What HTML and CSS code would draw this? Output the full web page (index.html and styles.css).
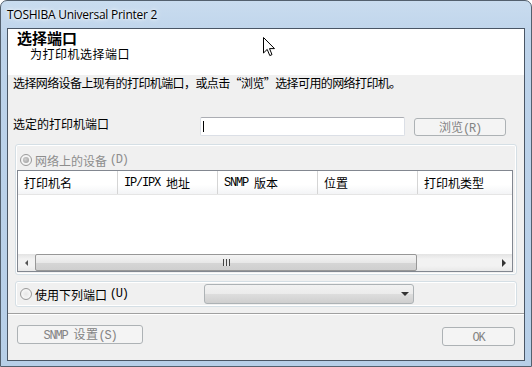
FILE: index.html
```html
<!DOCTYPE html>
<html lang="zh-CN">
<head>
  <meta charset="UTF-8">
  <title>TOSHIBA Universal Printer 2</title>
  <link rel="stylesheet" href="styles.css">
</head>
<body>

<div class="window">
  <div class="titlebar">TOSHIBA Universal Printer 2</div>

  <div class="client">
    <div class="header">
      <div class="head-title">选择端口</div>
      <div class="head-sub">为打印机选择端口</div>
    </div>

    <p class="desc">选择网络设备上现有的打印机端口，或点击“浏览”选择可用的网络打印机。</p>

    <div class="port-row">
      <span class="port-label">选定的打印机端口</span>
      <div class="textbox"><span class="caret"></span></div>
      <button class="btn btn-browse" disabled>浏览<span class="mono">(R)</span></button>
    </div>

    <div class="group group-net">
      <label class="radio-row disabled">
        <span class="radio checked"></span>网络上的设备 <span class="mono">(D)</span>
      </label>
      <div class="listview">
        <div class="lv-head">
          <div class="lv-col"><span>打印机名</span></div>
          <div class="lv-col"><span class="mono">IP/IPX </span><span>地址</span></div>
          <div class="lv-col"><span class="mono">SNMP </span><span>版本</span></div>
          <div class="lv-col"><span>位置</span></div>
          <div class="lv-col"><span>打印机类型</span></div>
        </div>
        <div class="lv-body"></div>
        <div class="hscroll">
          <div class="sb-arrow"><span class="tri-left"></span></div>
          <div class="sb-thumb"><span class="grip"></span></div>
          <div class="sb-track"></div>
          <div class="sb-arrow"><span class="tri-right"></span></div>
        </div>
      </div>
    </div>

    <div class="group group-port">
      <label class="radio-row">
        <span class="radio"></span>使用下列端口 <span class="mono">(U)</span>
      </label>
      <div class="combo"><span class="tri-down"></span></div>
    </div>

    <div class="separator"></div>

    <div class="buttons">
      <button class="btn btn-snmp" disabled><span class="mono">SNMP </span>设置<span class="mono">(S)</span></button>
      <button class="btn btn-ok" disabled><span class="mono">OK</span></button>
    </div>
  </div>

  <!-- mouse pointer caught in the screenshot -->
  <svg class="cursor" width="13" height="20" viewBox="0 0 13 20">
    <path d="M0.5 0.5 L0.5 16 L4.2 12.4 L6.8 18.6 L9 17.6 L6.5 11.6 L11.5 11.6 Z" fill="#fff" stroke="#000" stroke-width="1"/>
  </svg>
</div>

</body>
</html>
```

FILE: styles.css
```css
body {
  margin: 0;
  padding: 0;
  background: #fff;
  font-family: "Noto Sans CJK SC", "Noto Sans", sans-serif;
  font-size: 12px;
  color: #000;
}
.window {
  position: relative;
  width: 532px;
  height: 367px;
  box-sizing: border-box;
  border: 1px solid #53606e;
  border-radius: 7px 7px 0 0;
  background: linear-gradient(to bottom, #c9dcef 0, #bdd3ea 40px, #b7cfe8 100%);
  display: flex;
  flex-direction: column;
  overflow: hidden;
}
.titlebar {
  height: 27px;
  padding-left: 6px;
  line-height: 27px;
  font-family: "Open Sans", "Noto Sans", sans-serif;
  font-size: 12px;
  letter-spacing: -0.25px;
  color: #000;
  text-shadow: 0 0 6px #fff, 0 0 3px #fff;
}
.client {
  margin: 0 6px;
  height: 331px;
  border: 1px solid #4a5665;
  background: #f0f0f0;
  display: flex;
  flex-direction: column;
}
.mono {
  font-family: "Liberation Mono", monospace;
  font-size: 12px;
  letter-spacing: -1.2px;
}

/* header */
.header {
  height: 46px;
  background: #fff;
  padding: 1px 0 0 9px;
  box-sizing: border-box;
}
.head-title {
  font-size: 15px;
  font-weight: bold;
  line-height: 15px;
}
.head-sub {
  margin: 2px 0 0 13px;
  font-size: 12px;
  line-height: 13px;
  letter-spacing: 0.5px;
}
.desc {
  margin: 1px 0 0 5px;
  line-height: 14px;
  white-space: nowrap;
  letter-spacing: -0.6px;
}

/* port row */
.port-row {
  margin-top: 27px;
  height: 19px;
  display: flex;
  align-items: center;
}
.port-label {
  width: 187px;
  padding-left: 5px;
  line-height: 14px;
  margin-top: -5px;
}
.textbox {
  width: 205px;
  height: 19px;
  box-sizing: border-box;
  border: 1px solid #dbdfe6;
  border-top-color: #abadb3;
  background: #fff;
  border-radius: 2px;
  padding: 3px 0 0 2px;
}
.caret {
  display: block;
  width: 1px;
  height: 11px;
  background: #000;
}
.btn {
  font-family: "Noto Sans CJK SC", sans-serif;
  font-size: 12px;
  color: #838383;
  background: #f4f4f4;
  border: 1px solid #adb2b5;
  border-radius: 3px;
  padding: 0;
  line-height: 16px;
}
.btn-browse {
  margin-left: 9px;
  width: 92px;
  height: 18px;
}

/* group boxes */
.group {
  margin-left: 7px;
  width: 502px;
  box-sizing: border-box;
  border: 1px solid #d5dfe5;
  border-radius: 3px;
  box-shadow: inset 0 0 0 1px #fff;
}
.group-net {
  margin-top: 8px;
  height: 131px;
  padding: 7px 3px 2px 1px;
}
.radio-row {
  display: flex;
  align-items: center;
  height: 16px;
  padding-left: 3px;
  white-space: pre;
}
.radio-row.disabled {
  color: #8d8d8d;
}
.radio {
  width: 12px;
  height: 12px;
  box-sizing: border-box;
  border-radius: 50%;
  border: 1px solid #9a9a9a;
  background: radial-gradient(circle at 50% 50%, #e6e6e6 0, #f6f6f6 60%, #e0e0e0 100%);
  margin-right: 3px;
  position: relative;
}
.radio.checked::after {
  content: "";
  position: absolute;
  left: 2px;
  top: 2px;
  width: 6px;
  height: 6px;
  border-radius: 50%;
  background: radial-gradient(circle at 40% 40%, #d0d0d0, #9a9a9a);
}
.listview {
  margin-top: 2px;
  height: 102px;
  box-sizing: border-box;
  border: 1px solid #828790;
  background: #fff;
  display: flex;
  flex-direction: column;
}
.lv-head {
  display: flex;
  height: 24px;
  background: linear-gradient(to bottom, #fff 0, #fff 60%, #f3f4f6 100%);
  border-bottom: 1px solid #e5e5e5;
  box-sizing: border-box;
}
.lv-col {
  width: 100px;
  flex: none;
  box-sizing: border-box;
  border-right: 1px solid #d5d5d5;
  padding: 0 0 0 6px;
  display: flex;
  align-items: center;
  white-space: pre;
}
.lv-col:last-child {
  border-right: none;
  flex: 1;
}
.lv-body {
  flex: 1;
}
.hscroll {
  height: 17px;
  display: flex;
  background: linear-gradient(to bottom, #e3e3e3, #f2f2f2 30%, #f2f2f2 70%, #e8e8e8);
}
.sb-arrow {
  width: 17px;
  display: flex;
  align-items: center;
  justify-content: center;
}
.tri-left {
  border-top: 3px solid transparent;
  border-bottom: 3px solid transparent;
  border-right: 3px solid #555;
}
.tri-right {
  border-top: 4px solid transparent;
  border-bottom: 4px solid transparent;
  border-left: 4px solid #333;
}
.sb-thumb {
  width: 382px;
  box-sizing: border-box;
  border: 1px solid #979797;
  border-radius: 2px;
  background: linear-gradient(to bottom, #f4f4f4, #e8e8e8 50%, #d6d6d6 51%, #cfcfcf);
  display: flex;
  align-items: center;
  justify-content: center;
}
.grip {
  width: 7px;
  height: 7px;
  background: repeating-linear-gradient(to right, #444 0, #444 1px, #e6e6e6 1px, #e6e6e6 3px);
}
.sb-track {
  flex: 1;
}
.group-port {
  margin-top: 6px;
  height: 26px;
  display: flex;
  align-items: center;
  padding-left: 1px;
}
.group-port .radio-row {
  width: 184px;
}
.combo {
  width: 210px;
  height: 20px;
  box-sizing: border-box;
  border: 1px solid #adb2b5;
  border-radius: 3px;
  background: linear-gradient(to bottom, #f2f2f2, #ebebeb 50%, #dddddd 51%, #cfcfcf);
  display: flex;
  align-items: center;
  justify-content: flex-end;
  padding-right: 4px;
}
.tri-down {
  border-left: 4px solid transparent;
  border-right: 4px solid transparent;
  border-top: 4px solid #333;
}
.separator {
  margin-top: 6px;
  height: 1px;
  background: #a0a0a0;
  border-bottom: 1px solid #fff;
}
.buttons {
  display: flex;
  align-items: flex-start;
  justify-content: space-between;
  margin-top: 10px;
  padding: 0 9px 0 9px;
}
.btn-snmp {
  width: 126px;
  height: 19px;
  letter-spacing: 0.5px;
}
.btn-ok {
  margin-top: 2px;
  width: 73px;
  height: 19px;
}
.cursor {
  position: absolute;
  left: 262px;
  top: 36px;
}
```
